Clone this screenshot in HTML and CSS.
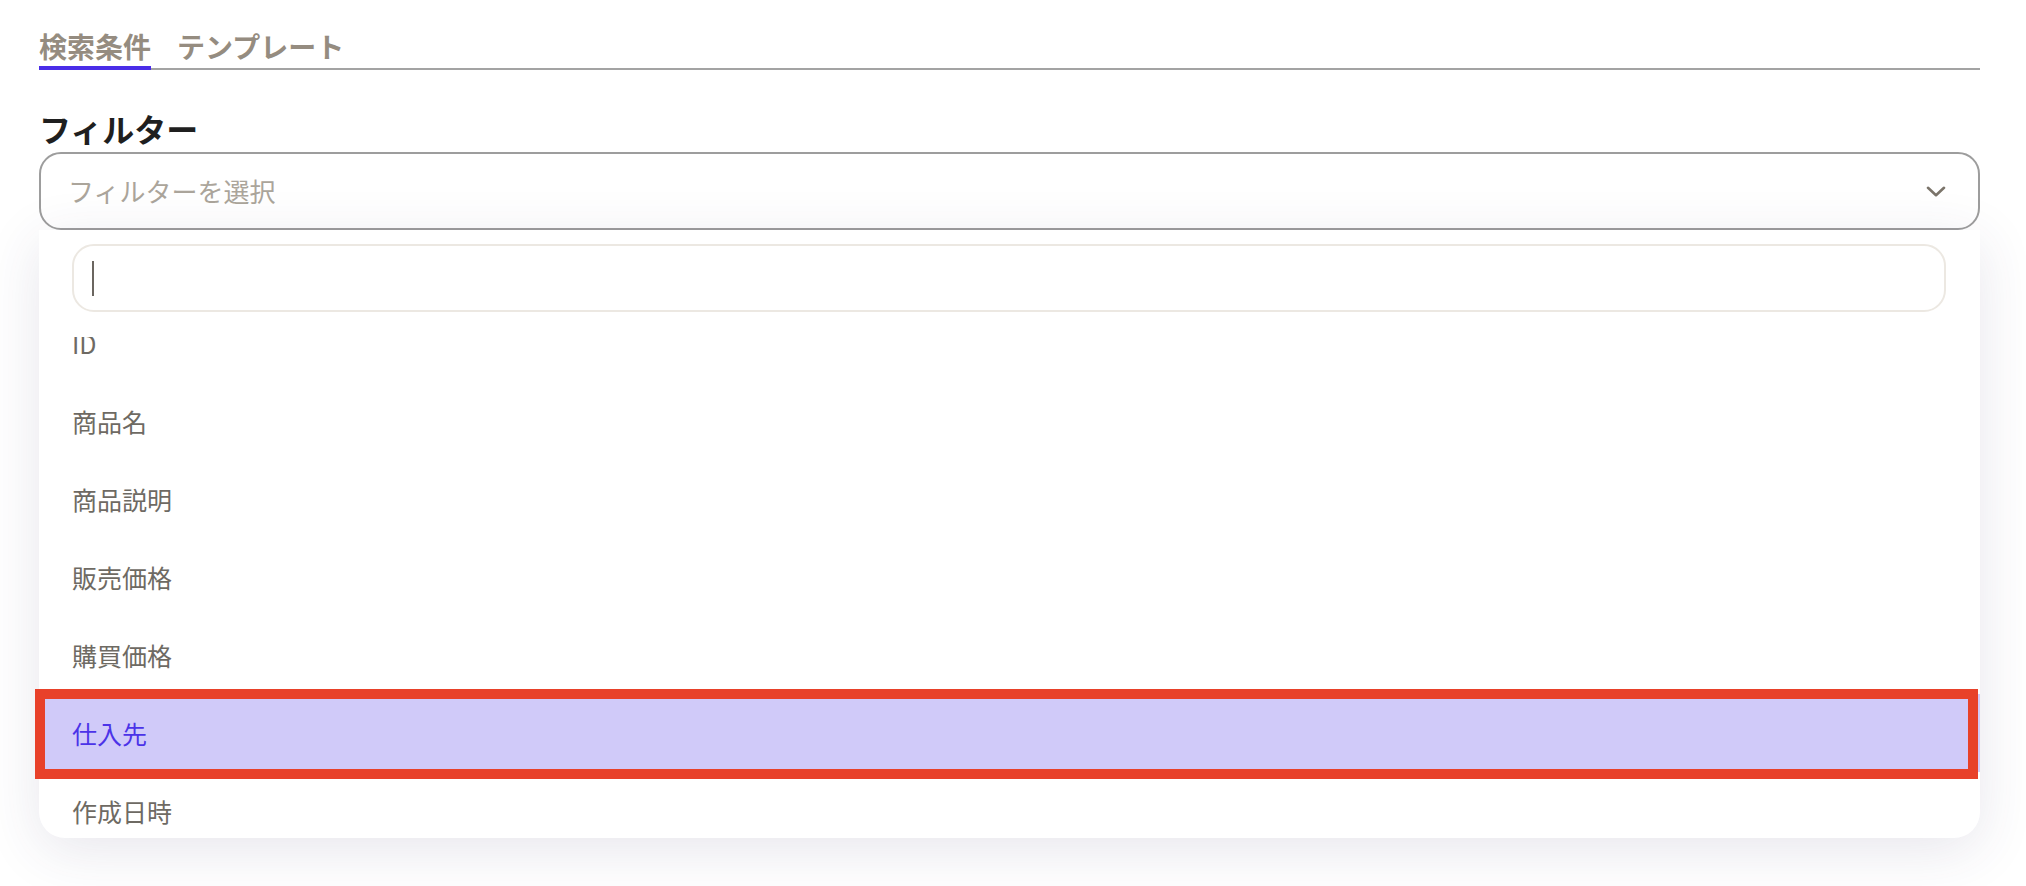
FILE: index.html
```html
<!DOCTYPE html>
<html lang="ja">
<head>
<meta charset="utf-8">
<title>フィルター</title>
<link rel="stylesheet" href="styles.css">
</head>
<body>
<div class="page">
  <nav class="tabs">
    <span class="tab active">検索条件</span>
    <span class="tab">テンプレート</span>
  </nav>

  <h2 class="label">フィルター</h2>

  <div class="select">
    <span class="placeholder">フィルターを選択</span>
    <svg class="chevron" width="20" height="11" viewBox="0 0 20 11" aria-hidden="true">
      <polyline points="2,1.8 10,9.2 18,1.8" fill="none" stroke="#7b746a" stroke-width="2.6" stroke-linecap="round" stroke-linejoin="round"/>
    </svg>
  </div>

  <div class="dropdown">
    <div class="search">
      <div class="search-input"><span class="caret"></span></div>
    </div>
    <div class="options">
      <ul class="option-list">
        <li class="option">ID</li>
        <li class="option">商品名</li>
        <li class="option">商品説明</li>
        <li class="option">販売価格</li>
        <li class="option">購買価格</li>
        <li class="option selected">仕入先<span class="mark"></span></li>
        <li class="option">作成日時</li>
      </ul>
    </div>
  </div>
</div>
</body>
</html>
```

FILE: styles.css
```css
* {
  box-sizing: border-box;
}

html, body {
  margin: 0;
  padding: 0;
  background: #ffffff;
}

body {
  font-family: "Noto Sans CJK JP", "Noto Sans", sans-serif;
  width: 2026px;
  min-height: 886px;
}

.page {
  padding: 0 46px 0 39px;
}

/* Tabs */
.tabs {
  display: flex;
  gap: 26px;
  margin-top: 28px;
  border-bottom: 2px solid #a3a3a3;
}

.tab {
  font-size: 28px;
  font-weight: 700;
  line-height: 30px;
  color: #958c80;
  padding: 3px 0 5px;
}

.tab.active {
  border-bottom: 4px solid #4a2de8;
  margin-bottom: -2px;
}

/* Label */
.label {
  margin: 38px 0 4px;
  font-size: 32px;
  line-height: 40px;
  font-weight: 700;
  color: #1f1f1f;
}

/* Select */
.select {
  height: 78px;
  border: 2px solid #9d9d9d;
  border-radius: 22px;
  display: flex;
  align-items: center;
  justify-content: space-between;
  padding: 0 32px 0 27px;
  background: #ffffff;
}

.placeholder {
  font-size: 26px;
  color: #aba59b;
  line-height: 1;
}

.chevron {
  display: block;
}

/* Dropdown panel */
.dropdown {
  position: relative;
  z-index: 1;
  background: #ffffff;
  border-radius: 0 0 26px 26px;
  box-shadow: 0 12px 56px rgba(60, 50, 95, 0.12);
}

.search {
  padding: 14px 34px 25px 33px;
}

.search-input {
  height: 68px;
  border: 2px solid #ece8e2;
  border-radius: 22px;
  display: flex;
  align-items: center;
  padding-left: 18px;
}

.caret {
  width: 2px;
  height: 35px;
  background: #6b6660;
}

.options {
  display: flow-root;
  height: 501px;
  clip-path: inset(0 -12px 0 -12px);
}

.option-list {
  list-style: none;
  margin: -33px 0 0;
  padding: 0;
}

.option {
  position: relative;
  height: 78px;
  display: flex;
  align-items: center;
  padding-left: 33px;
  font-size: 25px;
  color: #6e6a63;
}

.option.selected {
  background: #d0caf9;
  color: #4b33e8;
}

.mark {
  position: absolute;
  top: -5px;
  bottom: -7px;
  left: -4px;
  right: 2px;
  border: 10px solid #e8412a;
  pointer-events: none;
}
```
